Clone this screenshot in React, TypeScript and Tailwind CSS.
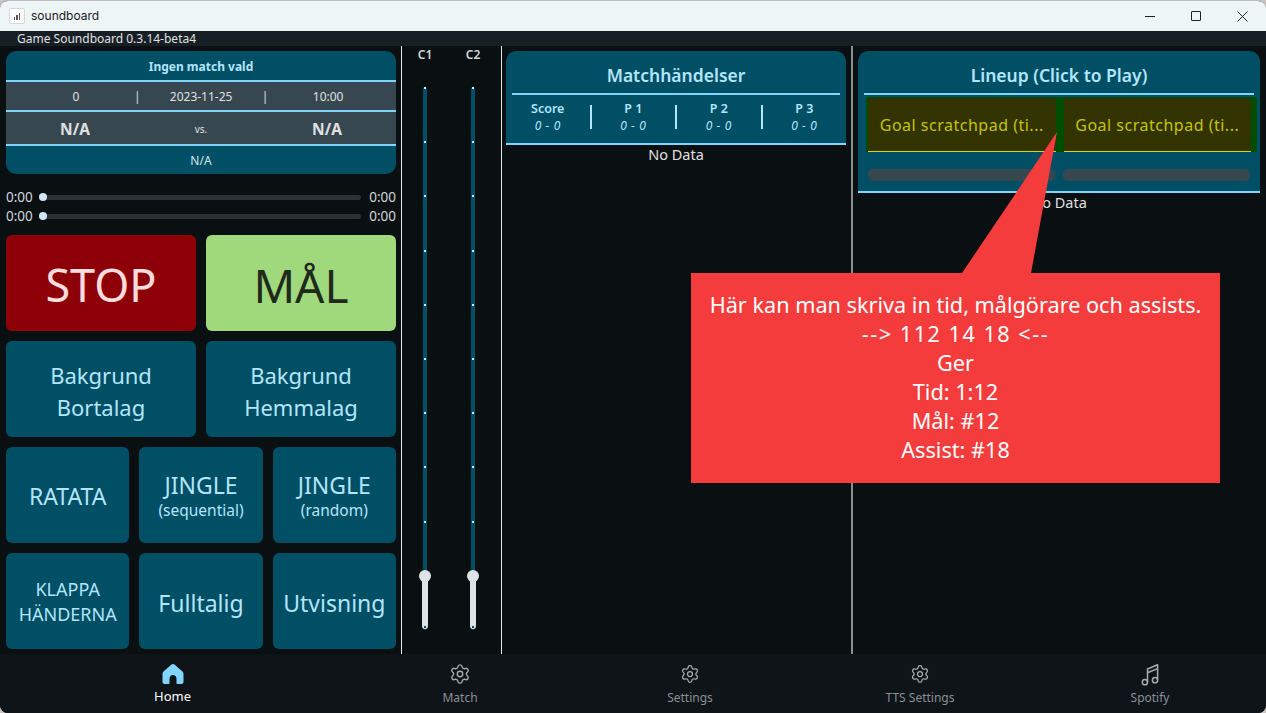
import { Settings } from 'lucide-react'

function PlayBar() {
  return (
    <div className="flex items-center h-[19px] text-[13.5px] text-[#cfd8dc]">
      <span className="w-[33px]">0:00</span>
      <div className="relative flex-1 h-[5px] bg-[#2b3235] rounded-full">
        <div className="absolute left-0 top-[-2px] w-[8px] h-[8px] rounded-full bg-[#cfe6f5]" />
      </div>
      <span className="w-[35px] text-right">0:00</span>
    </div>
  )
}

function PadButton({ children, className }: { children: React.ReactNode; className?: string }) {
  return (
    <div className={`h-[96px] pt-[4px] rounded-[6px] flex flex-col items-center justify-center text-center ${className ?? 'bg-[#004f64] text-[#b3e5fc]'}`}>
      {children}
    </div>
  )
}

function MixerChannel({ label }: { label: string }) {
  const ticks = [0, 1, 2, 3, 4, 5, 6, 7, 8]
  return (
    <div className="w-[46px] flex flex-col items-center">
      <div className="h-[41px] text-[12px] font-semibold text-[#cfd8dc] leading-[18px]">{label}</div>
      <div className="relative w-[4px] h-[543px] bg-[#004f64] rounded-full">
        {ticks.map((t) => (
          <div key={t} className="w-[2px] h-[2px] bg-[#cfe6f5] mx-auto mb-[52.2px]" />
        ))}
        <div className="absolute left-[-1px] top-[489px] w-[6px] h-[53px] bg-[#dfe3e8] rounded-b-[3px]" />
        <div className="absolute left-[1px] bottom-[2px] w-[2px] h-[2px] bg-[#004f64]" />
        <div className="absolute left-[-4px] top-[483px] w-[12px] h-[12px] rounded-full bg-[#dfe3e8]" />
      </div>
    </div>
  )
}

function PeriodCol({ label }: { label: string }) {
  return (
    <div className="flex-1 text-center text-[#b3e5fc]">
      <div className="text-[12.5px] font-semibold leading-[17px]">{label}</div>
      <div className="text-[12px] italic leading-[17px] tracking-[0.6px]">0 - 0</div>
    </div>
  )
}

function NavItem({ label, icon, active, className }: { label: string; icon: React.ReactNode; active?: boolean; className?: string }) {
  return (
    <div className={`${className ?? 'w-[230px]'} flex flex-col items-center justify-start pt-[8px]`}>
      <div className="h-[24px] flex items-center justify-center">{icon}</div>
      <div className={active ? 'text-[13px] text-white leading-[20px]' : 'mt-[2px] text-[12px] text-[#8b9094] leading-[20px]'}>{label}</div>
    </div>
  )
}

function HomeIcon() {
  return (
    <svg width="24" height="24" viewBox="0 0 24 24" fill="#81d4fa">
      <path d="M12 2c-.6 0-1.100.2-1.500.6L2.800 9.300c-.8.7-1.300 1.700-1.300 2.700V20c0 1.100.9 2 2 2H7.500c.6 0 1-.4 1-1V16.500c0-1.900 1.600-3.500 3.500-3.500s3.500 1.600 3.500 3.500V21c0 .6.4 1 1 1h4c1.100 0 2-.9 2-2v-8c0-1-.5-2-1.300-2.700L13.500 2.600C13.100 2.200 12.600 2 12 2z" />
    </svg>
  )
}

function NotesIcon() {
  return (
    <svg width="18" height="23" viewBox="0 0 18 23" fill="none" stroke="#a8acaf" strokeWidth="1.5" strokeLinejoin="round">
      <circle cx="3.900" cy="19.200" r="2.600" />
      <circle cx="14" cy="17.200" r="2.600" />
      <path d="M6.500 19.200V6L16.600 1.800V17.200M6.500 9.800L16.600 5.600" />
    </svg>
  )
}

export default function App() {
  return (
    <div className="w-[1266px] h-[713px] bg-[#c9c4c2] overflow-hidden font-['Noto_Sans',sans-serif]">
      <div className="relative w-full h-full rounded-[8px] overflow-hidden flex flex-col bg-[#0a0f12] border-t border-[#bdbdbd]">
        {/* title bar */}
        <div className="h-[30px] shrink-0 bg-[#eef5f7] flex items-center pl-[9px] text-[#1a1a1a]">
          <div className="w-[16px] h-[16px] rounded-[2px] bg-white border border-[#d5d8da] flex items-end justify-center gap-[1px] pb-[3px]">
            <div className="w-[1px] h-[3px] bg-[#555]" />
            <div className="w-[2px] h-[5px] bg-[#555]" />
            <div className="w-[1px] h-[7px] bg-[#555]" />
          </div>
          <span className="ml-[6px] text-[12px] font-['Inter',sans-serif]">soundboard</span>
          <div className="ml-auto flex items-center h-full pr-[1px]">
            <div className="w-[46px] flex justify-center"><div className="w-[10px] h-[1px] bg-[#222]" /></div>
            <div className="w-[46px] flex justify-center"><div className="w-[10px] h-[10px] border border-[#222] rounded-[1px]" /></div>
            <div className="w-[46px] flex justify-center">
              <svg width="11" height="11" viewBox="0 0 11 11" stroke="#222" strokeWidth="1"><path d="M.5.5l10 10M10.500.5l-10 10" /></svg>
            </div>
          </div>
        </div>
        <div className="h-[15px] shrink-0 bg-[#171f26] pl-[17px] text-[12px] leading-[15px] text-[#e0e0e0]">Game Soundboard 0.3.14-beta4</div>

        {/* main */}
        <div className="flex-1 flex min-h-0">
          {/* left column */}
          <div className="w-[402px] shrink-0 border-r border-[#e8e8e8] pl-[6px] pr-[5px] pt-[5px]">
            <div className="rounded-[10px] overflow-hidden bg-[#004f64] text-[#cfe6f5] h-[123px] flex flex-col">
              <div className="h-[29px] pt-[2px] flex items-center justify-center text-[12px] font-bold text-[#b3e5fc]">Ingen match vald</div>
              <div className="h-[2px] bg-[#81d4fa]" />
              <div className="h-[28px] pt-[2px] bg-[#37474f] flex items-center text-[12px] text-[#e0e0e0]">
                <span className="w-[128px] pl-[6px] box-content text-center">0</span>
                <span className="ml-[-6px]">|</span>
                <span className="w-[121px] text-center">2023-11-25</span>
                <span>|</span>
                <span className="flex-1 pr-[8px] text-center">10:00</span>
              </div>
              <div className="h-[2px] bg-[#81d4fa]" />
              <div className="h-[32px] pt-[3px] bg-[#37474f] flex items-center text-[#e0e0e0]">
                <span className="flex-1 text-center text-[15.5px] font-bold">N/A</span>
                <span className="w-[114px] text-center text-[10px]">vs.</span>
                <span className="flex-1 text-center text-[15.5px] font-bold">N/A</span>
              </div>
              <div className="h-[2px] bg-[#81d4fa]" />
              <div className="flex-1 pt-[2px] flex items-center justify-center text-[12px] text-[#cfe6f5]">N/A</div>
            </div>

            <div className="mt-[14px]">
              <PlayBar />
              <PlayBar />
            </div>

            <div className="mt-[9px] grid grid-cols-2 gap-x-[10px] gap-y-[10px]">
              <PadButton className="bg-[#8e0007] text-[#fbdcdc] text-[45px]">STOP</PadButton>
              <PadButton className="bg-[#a0d97b] text-[#1f2a1d] text-[46px]">MÅL</PadButton>
              <PadButton><span className="text-[22px] leading-[32px]">Bakgrund<br />Bortalag</span></PadButton>
              <PadButton><span className="text-[22px] leading-[32px]">Bakgrund<br />Hemmalag</span></PadButton>
            </div>
            <div className="mt-[10px] grid grid-cols-3 gap-x-[10px] gap-y-[10px]">
              <PadButton><span className="text-[23px] pb-[2px]">RATATA</span></PadButton>
              <PadButton>
                <div className="flex flex-col pb-[4px]">
                  <span className="text-[23px] leading-[30px]">JINGLE</span>
                  <span className="text-[15.5px] leading-[20px]">(sequential)</span>
                </div>
              </PadButton>
              <PadButton>
                <div className="flex flex-col pb-[4px]">
                  <span className="text-[23px] leading-[30px]">JINGLE</span>
                  <span className="text-[15.5px] leading-[20px]">(random)</span>
                </div>
              </PadButton>
              <PadButton><span className="text-[18px] leading-[25px] pb-[2px]">KLAPPA<br />HÄNDERNA</span></PadButton>
              <PadButton><span className="text-[23px]">Fulltalig</span></PadButton>
              <PadButton><span className="text-[23px]">Utvisning</span></PadButton>
            </div>
          </div>

          {/* mixer */}
          <div className="w-[100px] shrink-0 border-r border-[#e8e8e8] flex justify-start gap-[2px]">
            <MixerChannel label="C1" />
            <MixerChannel label="C2" />
          </div>

          {/* match events */}
          <div className="w-[351px] shrink-0 border-r-2 border-[#8b8f91] pl-[4px] pr-[5px] pt-[5px]">
            <div className="rounded-t-[10px] bg-[#004f64] h-[94px] flex flex-col border-b-2 border-[#81d4fa]">
              <div className="h-[42px] pt-[6px] flex items-center justify-center text-[17.5px] font-semibold text-[#b3e5fc]">Matchhändelser</div>
              <div className="h-[2px] mx-[6px] bg-[#81d4fa]" />
              <div className="flex-1 flex items-center pb-[5px]">
                <PeriodCol label="Score" />
                <div className="w-[2px] h-[24px] bg-[#b3e5fc]" />
                <PeriodCol label="P 1" />
                <div className="w-[2px] h-[24px] bg-[#b3e5fc]" />
                <PeriodCol label="P 2" />
                <div className="w-[2px] h-[24px] bg-[#b3e5fc]" />
                <PeriodCol label="P 3" />
              </div>
            </div>
            <div className="text-center text-[14.5px] leading-[18px] text-[#e0e0e0]">No Data</div>
          </div>

          {/* lineup */}
          <div className="flex-1 pl-[5px] pr-[6px] pt-[5px]">
            <div className="rounded-t-[10px] bg-[#004f64] h-[142px] flex flex-col border-b-2 border-[#81d4fa]">
              <div className="h-[42px] pt-[6px] flex items-center justify-center text-[17.5px] font-semibold text-[#b3e5fc]">Lineup (Click to Play)</div>
              <div className="h-[2px] mx-[6px] bg-[#81d4fa]" />
              <div className="ml-[8px] mr-[3px] mt-[2px] h-[55px] bg-[#004d00] flex gap-[8px] pl-[2px] pr-[6px] pt-[1px]">
                <div className="flex-1 rounded-t-[4px] bg-[#333300] border-b border-[#d8d800] flex items-center justify-center text-[16px] tracking-[0.5px] text-[#c4c400]">Goal scratchpad (ti...</div>
                <div className="flex-1 rounded-t-[4px] bg-[#333300] border-b border-[#d8d800] flex items-center justify-center text-[16px] tracking-[0.5px] text-[#c4c400]">Goal scratchpad (ti...</div>
              </div>
              <div className="ml-[10px] mr-[10px] mt-[17px] flex gap-[8px]">
                <div className="flex-1 h-[12px] rounded-[5px] bg-[#37474f]" />
                <div className="flex-1 h-[12px] rounded-[5px] bg-[#37474f]" />
              </div>
            </div>
            <div className="text-center text-[14.5px] leading-[18px] text-[#e0e0e0]">No Data</div>
          </div>
        </div>

        {/* bottom nav */}
        <div className="h-[59px] shrink-0 bg-[#0f1418] flex">
          <NavItem active className="w-[345px]" label="Home" icon={<HomeIcon />} />
          <NavItem label="Match" icon={<Settings size={22} strokeWidth={1.5} color="#a8acaf" />} />
          <NavItem label="Settings" icon={<Settings size={20} strokeWidth={1.5} color="#a8acaf" />} />
          <NavItem label="TTS Settings" icon={<Settings size={20} strokeWidth={1.5} color="#a8acaf" />} />
          <NavItem label="Spotify" icon={<NotesIcon />} />
        </div>

        {/* annotation callout */}
        <svg className="absolute left-[960px] top-[130px]" width="100" height="144" viewBox="0 0 100 144">
          <polygon points="97,1 2,142 71,142" fill="#f43c3c" />
        </svg>
        <div className="absolute left-[691px] top-[272px] w-[529px] h-[210px] pb-[2px] bg-[#f43c3c] flex flex-col justify-center items-center text-center text-white text-[21.66px] leading-[29.1px]">
          <div>Här kan man skriva in tid, målgörare och assists.</div>
          <div className="tracking-[1.5px]">--&gt; 112 14 18 &lt;--</div>
          <div>Ger</div>
          <div>Tid: 1:12</div>
          <div>Mål: #12</div>
          <div>Assist: #18</div>
        </div>
      </div>
    </div>
  )
}
